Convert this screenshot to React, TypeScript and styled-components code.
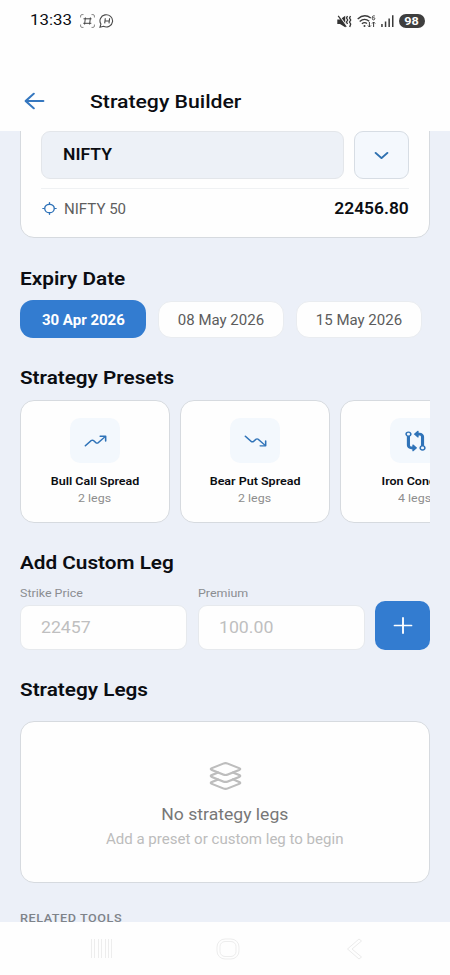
import React from "react";
import styled, { createGlobalStyle, css } from "styled-components";
import {
  IoAdd,
  IoArrowBackOutline,
  IoChevronDownOutline,
  IoGitCompare,
  IoLayersOutline,
  IoLocateOutline,
  IoTrendingDownOutline,
  IoTrendingUpOutline,
} from "react-icons/io5";

const Global = createGlobalStyle`
  * { box-sizing: border-box; }
  body { margin: 0; background: #fff; }
  button { border: 0; padding: 0; font: inherit; background: none; }
`;

const BLUE = "#337cd0";
const PAGE = "#ecf0f8";

const Screen = styled.div`
  width: 450px;
  height: 975px;
  overflow: hidden;
  display: flex;
  flex-direction: column;
  background: #fefefe;
  font-family: Roboto, "Liberation Sans", sans-serif;
  color: #0b0d12;
`;

type TextProps = {
  $size: number;
  $weight?: number;
  $color?: string;
  $stretch?: number;
  $from?: "left" | "center" | "right";
  $spacing?: number;
};

const Text = styled.span<TextProps>`
  display: block;
  white-space: nowrap;
  line-height: 20px;
  font-size: ${(p) => p.$size}px;
  font-weight: ${(p) => p.$weight ?? 400};
  color: ${(p) => p.$color ?? "inherit"};
  letter-spacing: ${(p) => p.$spacing ?? 0}px;
  transform: scaleX(${(p) => p.$stretch ?? 1.14});
  transform-origin: ${(p) => p.$from ?? "left"} center;
`;

const StatusBar = styled.div`
  flex: none;
  height: 42px;
  padding: 0 25px 0 30px;
  display: flex;
  align-items: center;
  justify-content: space-between;
`;

const StatusGroup = styled.div<{ $gap: number }>`
  display: flex;
  align-items: center;
  gap: ${(p) => p.$gap}px;
`;

const Clock = styled.div`
  width: 44px;
`;

const ChatGlyph = styled.svg`
  margin-left: -2px;
`;

const Battery = styled.div`
  width: 26px;
  height: 14px;
  border-radius: 7px;
  background: #3e3e3e;
  display: flex;
  align-items: center;
  justify-content: center;
`;

const TitleBar = styled.header`
  flex: none;
  height: 89px;
  padding: 29px 21px 0 20px;
  display: flex;
  align-items: center;
  gap: 41px;
`;

const PageTitle = styled.div`
  padding-top: 1px;
`;

const BackButton = styled.button`
  display: flex;
  color: #3577bf;
`;

const Icon = styled.span<{ $w: number; $h: number; $stroke?: number }>`
  display: block;
  flex: none;
  width: ${(p) => p.$w}px;
  height: ${(p) => p.$h}px;
  svg {
    display: block;
    width: 100%;
    height: 100%;
  }
  svg path {
    ${(p) => p.$stroke && css`stroke-width: ${p.$stroke}px;`}
  }
`;

const Content = styled.main`
  flex: none;
  height: 791px;
  padding: 0 20px;
  overflow: hidden;
  background: ${PAGE};
`;

const panel = css`
  background: #fefefe;
  border: 1px solid #d6dadf;
  border-radius: 14px;
`;

const SymbolCard = styled.section`
  ${panel}
  height: 127px;
  margin-top: -20px;
  padding: 19px 20px 0;
`;

const SymbolRow = styled.div`
  display: flex;
  gap: 10px;
  height: 48px;
`;

const SymbolInput = styled.div`
  flex: 1;
  display: flex;
  align-items: center;
  padding-left: 21px;
  border: 1px solid #e3e6ea;
  border-radius: 9px;
  background: #edf1f7;
`;

const DropButton = styled.button`
  width: 55px;
  display: flex;
  align-items: center;
  justify-content: center;
  border: 1px solid #d7dde4;
  border-radius: 9px;
  background: #f4f8fd;
  color: #2e70b0;
`;

const QuoteRow = styled.div`
  margin-top: 9px;
  padding-top: 10px;
  border-top: 1px solid #eff1f3;
  display: flex;
  justify-content: space-between;
`;

const QuoteName = styled.div`
  display: flex;
  gap: 6px;
  padding-top: 0;
  color: #2f72b8;
`;

const LocateMark = styled.div`
  padding-top: 2px;
`;

const Heading = styled.h2<{ $top: number }>`
  margin: ${(p) => p.$top}px 0 0;
  height: 20px;
`;

const DateRow = styled.div`
  display: flex;
  align-items: center;
  height: 38px;
  margin-top: 11px;
  gap: 12px;
`;

const DateChip = styled.button<{ $active?: boolean }>`
  flex: none;
  width: 126px;
  height: ${(p) => (p.$active ? 38 : 37)}px;
  padding-top: ${(p) => (p.$active ? 2 : 1)}px;
  display: flex;
  align-items: center;
  justify-content: center;
  border-radius: 13px;
  border: ${(p) => (p.$active ? "0" : "1px solid #e9ecf0")};
  background: ${(p) => (p.$active ? BLUE : "#fefefe")};
`;

const PresetRow = styled.div`
  display: flex;
  gap: 10px;
  margin-top: 12px;
  overflow: hidden;
`;

const PresetCard = styled.article`
  ${panel}
  flex: none;
  width: 150px;
  height: 123px;
  padding-top: 17px;
  display: flex;
  flex-direction: column;
  align-items: center;
`;

const PresetIcon = styled.div`
  width: 50px;
  height: 45px;
  margin-bottom: 8px;
  display: flex;
  align-items: center;
  justify-content: center;
  border-radius: 10px;
  background: #f3f8fd;
  color: #2f73b8;
`;

const PresetName = styled.div`
  height: 17px;
`;

const LegForm = styled.div`
  display: grid;
  grid-template-columns: 167px 167px 55px;
  column-gap: 10.5px;
  align-items: end;
  margin-top: 10px;
`;

const Field = styled.label`
  display: flex;
  flex-direction: column;
  gap: 2px;
`;

const FieldBox = styled.div`
  height: 45px;
  padding: 1px 0 0 20px;
  display: flex;
  align-items: center;
  border: 1px solid #e6e9ed;
  border-radius: 9px;
  background: #fefefe;
`;

const AddButton = styled.button`
  height: 49px;
  display: flex;
  align-items: center;
  justify-content: center;
  border-radius: 10px;
  background: ${BLUE};
  color: #fff;
`;

const EmptyCard = styled.section`
  ${panel}
  height: 162px;
  margin: 21px 0 25px;
  padding-top: 37px;
  display: flex;
  flex-direction: column;
  align-items: center;
  color: #bdbdbd;
`;

const EmptyTitle = styled.div`
  margin: 12px 0 4px;
`;

const NavBar = styled.nav`
  flex: none;
  height: 53px;
  padding: 0 86px 0 90px;
  display: grid;
  grid-template-columns: 126px 1fr auto;
  align-items: center;
`;

const PRESETS = [
  { name: "Bull Call Spread", legs: "2 legs", icon: IoTrendingUpOutline },
  { name: "Bear Put Spread", legs: "2 legs", icon: IoTrendingDownOutline },
  { name: "Iron Condor", legs: "4 legs", icon: IoGitCompare },
];

const DATES = ["30 Apr 2026", "08 May 2026", "15 May 2026"];

const FIELDS = [
  { label: "Strike Price", hint: "22457" },
  { label: "Premium", hint: "100.00" },
];

function Status() {
  return (
    <StatusBar>
      <StatusGroup $gap={6}>
        <Clock>
          <Text $size={14.4} $weight={400} $stretch={1.17}>13:33</Text>
        </Clock>
        <svg width="15" height="14" viewBox="0 0 15 14" fill="none" stroke="#888" strokeWidth="1">
          <path d="M.6 3.5V2Q.6.6 2 .6H3.5M11.5.6H13Q14.4.6 14.4 2V3.5M14.4 10.5V12Q14.4 13.4 13 13.4H11.5M3.5 13.4H2Q.6 13.4.6 12V10.5" />
          <path d="M5.4 3.5 4.6 10.5M10.4 3.5 9.6 10.5M3.5 4.8H11.5M3.3 9.3H11.3" stroke="#444" />
        </svg>
        <ChatGlyph width="16" height="14" viewBox="0 0 16 14" fill="none" stroke="#4a4a4a" strokeWidth="1.1">
          <path d="M1 13.2 1.9 10A6.3 6.1 0 1 1 4.5 12.3Z" />
          <path d="M6.3 4.3 5.7 9.4M10.6 4.3 10 9.4M6 7H10.3" />
        </ChatGlyph>
      </StatusGroup>
      <StatusGroup $gap={5}>
        <svg width="15" height="13" viewBox="0 0 15 13">
          <path d="M.3 4.5H3L8.2.8V12.2L3 9H.3Z" fill="#333" />
          <path d="M2.2.8 9.5 11" stroke="#fefefe" strokeWidth="1.4" />
          <path d="M1.2.8 9.2 11.8" stroke="#333" strokeWidth="1.2" />
          <path d="M10.5 1 9.5 3 10.7 5 9.5 7 10.5 9M13.5 1 12.5 3 13.7 5 12.5 7 13.7 9 12.7 12" fill="none" stroke="#333" strokeWidth="1.3" />
        </svg>
        <svg width="19" height="13" viewBox="0 0 19 13" fill="none" stroke="#3a3a3a" strokeWidth="1.4">
          <path d="M.7 4Q7.2-1.8 13.8 3M2.7 6.5Q7.5 2.4 12.2 6.2M4.9 8.7Q7.500 6.600 10 8.500" />
          <circle cx="7.500" cy="11" r="1" fill="#3a3a3a" stroke="none" />
          <path d="M17.800.9H16.200Q15.300 1 15.300 2.500V3.500Q15.300 4.900 16.500 4.900T17.800 3.700 16.500 2.700H15.500" strokeWidth=".9" />
          <path d="M12.400 7V12M10.900 10.500 12.400 12 13.900 10.500M16.600 12V7M15.100 8.500 16.600 7 18.100 8.500" strokeWidth="1" />
        </svg>
        <svg width="13" height="12" viewBox="0 0 13 12" fill="#3a3a3a">
          <path d="M.2 9H1.700V12H.2ZM3.800 6.500H5.300V12H3.800ZM7.400 3.500H8.900V12H7.400ZM11 .2H12.500V12H11Z" />
        </svg>
        <Battery>
          <Text $size={11.5} $weight={700} $color="#fff" $from="center" $stretch={1.1}>98</Text>
        </Battery>
      </StatusGroup>
    </StatusBar>
  );
}

export default function App() {
  return (
    <Screen>
      <Global />
      <Status />
      <TitleBar>
        <BackButton aria-label="Back">
          <Icon $w={29} $h={26} $stroke={38}><IoArrowBackOutline preserveAspectRatio="none" /></Icon>
        </BackButton>
        <PageTitle>
          <Text $size={19} $weight={500} $stretch={1.116}>Strategy Builder</Text>
        </PageTitle>
      </TitleBar>

      <Content>
        <SymbolCard>
          <SymbolRow>
            <SymbolInput>
              <Text $size={16} $weight={600} $stretch={1.095}>NIFTY</Text>
            </SymbolInput>
            <DropButton aria-label="Choose symbol">
              <Icon $w={21} $h={19}><IoChevronDownOutline preserveAspectRatio="none" /></Icon>
            </DropButton>
          </SymbolRow>
          <QuoteRow>
            <QuoteName>
              <LocateMark>
                <Icon $w={17} $h={15} $stroke={42}><IoLocateOutline preserveAspectRatio="none" /></Icon>
              </LocateMark>
              <Text $size={14} $color="#5e5e5e" $stretch={1.075}>NIFTY 50</Text>
            </QuoteName>
            <Text $size={15.6} $weight={600} $from="right" $stretch={1.115}>22456.80</Text>
          </QuoteRow>
        </SymbolCard>

        <Heading $top={31}><Text $size={18.5} $weight={600} $stretch={1.123}>Expiry Date</Text></Heading>
        <DateRow>
          {DATES.map((d, i) => (
            <DateChip key={d} $active={i === 0}>
              <Text $size={13.9} $weight={i === 0 ? 700 : 400} $color={i === 0 ? "#fff" : "#5c5c5c"} $from="center" $stretch={1.08}>{d}</Text>
            </DateChip>
          ))}
        </DateRow>

        <Heading $top={30}><Text $size={18.5} $weight={600} $stretch={1.118}>Strategy Presets</Text></Heading>
        <PresetRow>
          {PRESETS.map(({ name, legs, icon: Glyph }) => (
            <PresetCard key={name}>
              <PresetIcon>
                <Icon $w={25} $h={22}><Glyph preserveAspectRatio="none" /></Icon>
              </PresetIcon>
              <PresetName>
                <Text $size={11.6} $weight={600} $from="center" $stretch={1.078}>{name}</Text>
              </PresetName>
              <Text $size={11.7} $color="#8d8d8d" $from="center" $stretch={1.06}>{legs}</Text>
            </PresetCard>
          ))}
        </PresetRow>

        <Heading $top={30}><Text $size={18.5} $weight={600} $stretch={1.12}>Add Custom Leg</Text></Heading>
        <LegForm>
          {FIELDS.map((f) => (
            <Field key={f.label}>
              <Text $size={11.7} $color="#8b8d91" $stretch={1.065}>{f.label}</Text>
              <FieldBox>
                <Text $size={16} $color="#bfbfc0" $stretch={1.105}>{f.hint}</Text>
              </FieldBox>
            </Field>
          ))}
          <AddButton aria-label="Add leg">
            <Icon $w={30} $h={27}><IoAdd preserveAspectRatio="none" /></Icon>
          </AddButton>
        </LegForm>

        <Heading $top={30}><Text $size={18.5} $weight={600} $stretch={1.12}>Strategy Legs</Text></Heading>
        <EmptyCard>
          <Icon $w={39} $h={34}><IoLayersOutline preserveAspectRatio="none" /></Icon>
          <EmptyTitle>
            <Text $size={16} $color="#777" $from="center" $stretch={1.098}>No strategy legs</Text>
          </EmptyTitle>
          <Text $size={13.9} $color="#bcbcbc" $from="center" $stretch={1.083}>Add a preset or custom leg to begin</Text>
        </EmptyCard>
        <Text $size={11.6} $weight={500} $color="#7e8389" $spacing={0.5} $stretch={1.09}>RELATED TOOLS</Text>
      </Content>

      <NavBar>
        <svg width="23" height="21" viewBox="0 0 23 21" fill="none" stroke="#ededed" strokeWidth="1">
          <path d="M1.500 1V20M4.500 1V20M8.500 1V20M11.500 1V20M15.500 1V20M18.500 1V20M21.500 1V20" />
        </svg>
        <svg width="24" height="22" viewBox="0 0 24 22" fill="none" stroke="#ededed" strokeWidth="1">
          <rect x="1" y="1" width="22" height="20" rx="8" />
          <rect x="4" y="3.500" width="16" height="15" rx="5" />
        </svg>
        <svg width="18" height="22" viewBox="0 0 18 22" fill="none" stroke="#ebebeb" strokeWidth="1">
          <path d="M13 1 1.500 11 13 21 15.500 19 6 11 15.500 3Z" />
        </svg>
      </NavBar>
    </Screen>
  );
}
